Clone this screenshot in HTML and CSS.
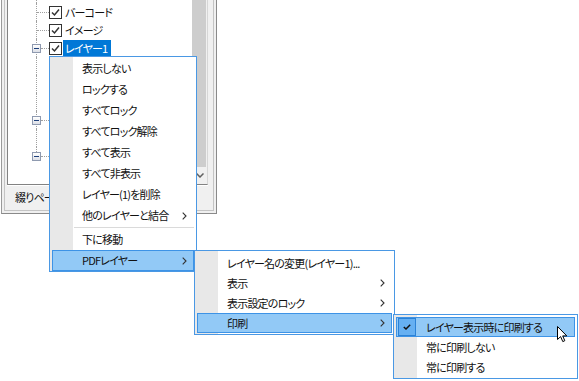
FILE: index.html
```html
<!DOCTYPE html>
<html lang="ja">
<head>
<meta charset="utf-8">
<title>PDFレイヤー メニュー</title>
<link rel="stylesheet" href="styles.css">
</head>
<body>
<div class="panel">
  <div class="frame">
    <div class="treebox">
      <ul class="tree">
        <li class="row"><span class="lines"><span class="conn"></span></span></li>
        <li class="row"><span class="lines"><span class="conn"><span class="hline"></span></span></span><span class="cb"><svg viewBox="0 0 11 11"><path d="M2 5.5 L4.5 8 L9 2.5"/></svg></span><span class="label">バーコード</span></li>
        <li class="row"><span class="lines"><span class="conn"><span class="hline"></span></span></span><span class="cb"><svg viewBox="0 0 11 11"><path d="M2 5.5 L4.5 8 L9 2.5"/></svg></span><span class="label">イメージ</span></li>
        <li class="row"><span class="lines"><span class="conn"><span class="exp"><span class="minus"></span></span><span class="hline"></span></span></span><span class="cb"><svg viewBox="0 0 11 11"><path d="M2 5.5 L4.5 8 L9 2.5"/></svg></span><span class="label selected">レイヤー1</span></li>
        <li class="row"><span class="lines"><span class="conn"></span></span></li>
        <li class="row"><span class="lines"><span class="conn"></span></span></li>
        <li class="row"><span class="lines"><span class="conn"></span></span></li>
        <li class="row"><span class="lines"><span class="conn"><span class="exp"><span class="minus"></span></span><span class="hline"></span></span></span><span class="cb dark"></span></li>
        <li class="row"><span class="lines"><span class="conn"></span></span></li>
        <li class="row"><span class="lines"><span class="conn end"><span class="exp"><span class="minus"></span></span><span class="hline"></span></span></span><span class="cb dark"></span></li>
      </ul>
      <div class="scroll">
        <div class="thumb"></div>
        <div class="sbtn"><svg viewBox="0 0 8 5"><path d="M0.5 0.5 L4 4 L7.5 0.5"/></svg></div>
      </div>
    </div>
    <div class="tabs"><span class="tab">綴りページ</span></div>
  </div>
</div>

<div class="menu m1">
  <ul class="items">
    <li class="item"><span class="icon"></span><span class="text">表示しない</span></li>
    <li class="item"><span class="icon"></span><span class="text">ロックする</span></li>
    <li class="item"><span class="icon"></span><span class="text">すべてロック</span></li>
    <li class="item"><span class="icon"></span><span class="text">すべてロック解除</span></li>
    <li class="item"><span class="icon"></span><span class="text">すべて表示</span></li>
    <li class="item"><span class="icon"></span><span class="text">すべて非表示</span></li>
    <li class="item"><span class="icon"></span><span class="text">レイヤー(1)を削除</span></li>
    <li class="item"><span class="icon"></span><span class="text">他のレイヤーと結合</span><svg class="arrow" viewBox="0 0 5 8"><path d="M0.7 0.7 L4 4 L0.7 7.3"/></svg></li>
    <li class="sep"></li>
    <li class="item"><span class="icon"></span><span class="text">下に移動</span></li>
    <li class="item active"><span class="icon"></span><span class="text">PDFレイヤー</span><svg class="arrow" viewBox="0 0 5 8"><path d="M0.7 0.7 L4 4 L0.7 7.3"/></svg></li>
  </ul>
</div>

<div class="menu m2">
  <ul class="items">
    <li class="item"><span class="icon"></span><span class="text">レイヤー名の変更(レイヤー1)...</span></li>
    <li class="item"><span class="icon"></span><span class="text">表示</span><svg class="arrow" viewBox="0 0 5 8"><path d="M0.7 0.7 L4 4 L0.7 7.3"/></svg></li>
    <li class="item"><span class="icon"></span><span class="text">表示設定のロック</span><svg class="arrow" viewBox="0 0 5 8"><path d="M0.7 0.7 L4 4 L0.7 7.3"/></svg></li>
    <li class="item active"><span class="icon"></span><span class="text">印刷</span><svg class="arrow" viewBox="0 0 5 8"><path d="M0.7 0.7 L4 4 L0.7 7.3"/></svg></li>
  </ul>
</div>

<div class="menu m3">
  <ul class="items">
    <li class="item active"><span class="icon"><span class="checkbox"><svg viewBox="0 0 8 6"><path d="M0.8 3 L3 5 L7.2 0.8"/></svg></span></span><span class="text">レイヤー表示時に印刷する</span></li>
    <li class="item"><span class="icon"></span><span class="text">常に印刷しない</span></li>
    <li class="item"><span class="icon"></span><span class="text">常に印刷する</span></li>
  </ul>
</div>

<svg class="cursor" viewBox="0 0 12 17"><path d="M0.5 0.5 L0.5 13.5 L3.6 10.6 L5.8 15.6 L7.8 14.7 L5.7 9.9 L9.8 9.9 Z"/></svg>
</body>
</html>
```

FILE: styles.css
```css
* { box-sizing: border-box; }

body {
  margin: 0;
  width: 579px;
  height: 381px;
  position: relative;
  overflow: hidden;
  background: #ffffff;
  font-family: "Noto Sans CJK JP", "Noto Sans", sans-serif;
  font-size: 11px;
  letter-spacing: -0.8px;
  line-height: 1;
  color: #111;
  font-feature-settings: "palt";
}

ul { list-style: none; margin: 0; padding: 0; }

/* ---------- background panel ---------- */
.panel {
  width: 216px;
  height: 215px;
  margin: -1px 0 0 1px;
  background: #f0f0f0;
  border: 1px solid #9a9a9a;
  border-right-color: #8a8a8a;
  border-bottom-color: #8a8a8a;
  padding: 0 2px 2px 2px;
}

.frame {
  height: 100%;
  border: 1px solid #c4c4c4;
  border-top: none;
  padding: 0 5px 1px 2px;
  display: flex;
  flex-direction: column;
}

.treebox {
  height: 185px;
  display: flex;
  background: #fff;
  border: 1px solid #828282;
  border-top: none;
  border-right-color: #d6d6d6;
  overflow: hidden;
}

.tree {
  flex: 1;
  margin-top: -15px;
}

.row {
  height: 18px;
  display: flex;
  align-items: center;
}

.lines {
  width: 41px;
  height: 18px;
  padding-left: 28px;
  display: flex;
  flex: none;
}

.conn {
  width: 13px;
  height: 18px;
  border-left: 1px dotted #a0a0a0;
  display: flex;
  align-items: center;
}

.conn.end {
  border-left: none;
  padding-left: 1px;
  background: repeating-linear-gradient(to bottom, #a0a0a0 0 1px, transparent 1px 2px) 0 0 / 1px 9px no-repeat;
}

.hline {
  flex: 1;
  height: 0;
  border-top: 1px dotted #a0a0a0;
}

.exp {
  width: 9px;
  height: 9px;
  margin-left: -5px;
  flex: none;
  border: 1px solid #8f9ab0;
  background: linear-gradient(#ffffff, #dcdfe6);
  display: flex;
  align-items: center;
  justify-content: center;
}

.minus {
  width: 5px;
  height: 1px;
  background: #1d3f7a;
}

.cb {
  width: 13px;
  height: 13px;
  flex: none;
  border: 1px solid #333;
  background: #fff;
  display: flex;
  align-items: center;
  justify-content: center;
}

.cb.dark { border-color: #1c3c6c; border-width: 2px; }

.cb svg { width: 11px; height: 11px; }
.cb path { fill: none; stroke: #333; stroke-width: 1.5; }

.label {
  height: 17px;
  margin-left: 1px;
  padding: 0 4px 0 2px;
  display: flex;
  align-items: center;
  white-space: nowrap;
}

.label.selected {
  background: #0078d7;
  color: #fff;
}

.scroll {
  width: 15px;
  flex: none;
  display: flex;
  flex-direction: column;
  background: #f0f0f0;
}

.thumb {
  flex: 1;
  background: #cdcdcd;
  margin-right: 1px;
}

.sbtn {
  height: 17px;
  display: flex;
  align-items: center;
  justify-content: center;
  background: #f0f0f0;
}

.sbtn svg { width: 8px; height: 5px; }
.sbtn path { fill: none; stroke: #606060; stroke-width: 1.5; }

.tabs {
  flex: 1;
  display: flex;
  align-items: stretch;
  border-top: 1px solid #ffffff;
}

.tab {
  padding: 0 8px;
  display: flex;
  align-items: center;
  white-space: nowrap;
}

/* ---------- context menus ---------- */
.menu {
  position: absolute;
  border: 1px solid #4a98e4;
  background: linear-gradient(to right, #e8e8e8 23px, #ffffff 23px);
  padding: 2px 0 1px;
}

.m1 { left: 49px; top: 56px; width: 148px; padding: 1px 0 0; }
.m2 { left: 194px; top: 250px; width: 201px; }
.m3 { left: 393px; top: 314px; width: 185px; }

.item {
  height: 20px;
  margin: 0 2px;
  display: flex;
  align-items: center;
  border: 1px solid transparent;
  white-space: nowrap;
}

.m1 .item { height: 21px; }

.item.active {
  background: #92c9f6;
  border-color: #3d93e6;
}

.icon {
  width: 21px;
  height: 100%;
  flex: none;
  display: flex;
  align-items: center;
}

.checkbox {
  width: 18px;
  height: 18px;
  margin-left: 1px;
  background: #66b0f2;
  border: 1px solid #2c82d6;
  display: flex;
  align-items: center;
  justify-content: center;
}

.checkbox svg { width: 8px; height: 6px; }
.checkbox path { fill: none; stroke: #111; stroke-width: 1.5; }

.text {
  flex: 1;
  padding-left: 8px;
}

.arrow {
  width: 5px;
  height: 8px;
  margin-right: 6px;
  flex: none;
}

.arrow path { fill: none; stroke: #333; stroke-width: 1.1; }

.sep {
  height: 1px;
  margin: 1px 2px 1px 24px;
  background: #dadada;
}

.cursor {
  position: absolute;
  left: 557px;
  top: 326px;
  width: 12px;
  height: 17px;
}

.cursor path { fill: #fff; stroke: #000; stroke-width: 1; stroke-linejoin: miter; }
```
